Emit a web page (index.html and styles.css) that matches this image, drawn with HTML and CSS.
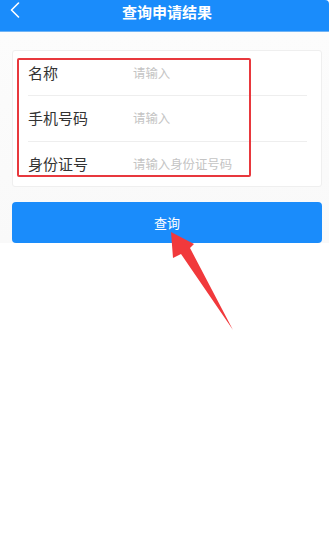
FILE: index.html
```html
<!DOCTYPE html>
<html lang="zh-CN">
<head>
<meta charset="utf-8">
<title>查询申请结果</title>
<link rel="stylesheet" href="styles.css">
</head>
<body>
<header class="topbar">
  <span class="back">
    <svg width="10" height="16" viewBox="0 0 10 16"><path d="M8.5 1 L1.5 8 L8.5 15" fill="none" stroke="#fff" stroke-width="1.6" stroke-linecap="round" stroke-linejoin="round"/></svg>
  </span>
  <h1 class="title">查询申请结果</h1>
</header>
<main class="main">
  <section class="card">
    <div class="row"><span class="label">名称</span><span class="ph">请输入</span></div>
    <div class="row"><span class="label">手机号码</span><span class="ph">请输入</span></div>
    <div class="row"><span class="label">身份证号</span><span class="ph">请输入身份证号码</span></div>
  </section>
  <button class="btn">查询</button>
</main>
<div class="highlight"></div>
<svg class="arrow" width="80" height="110" viewBox="160 225 80 110">
  <polygon points="171,232 194,244 190,248 233,330 181,254 173,258" fill="#f1393c"/>
</svg>
</body>
</html>
```
FILE: styles.css
```css
* { box-sizing: border-box; }
html, body { margin: 0; padding: 0; }
body {
  width: 329px;
  height: 554px;
  background: #ffffff;
  font-family: "Noto Sans CJK SC", "Noto Sans", sans-serif;
  position: relative;
  overflow: hidden;
}
.topbar {
  height: 32px;
  background: #1a8cfb;
  border-bottom: 1px solid #6fb3f5;
  border-top-right-radius: 4px;
  display: flex;
  align-items: center;
  justify-content: center;
  position: relative;
  padding-bottom: 8px;
}
.back {
  position: absolute;
  left: 10px;
  top: 2px;
  display: flex;
}
.title {
  margin: 0;
  color: #fff;
  font-size: 15px;
  font-weight: 700;
  line-height: 20px;
  padding-left: 5px;
}
.main {
  padding: 18px 7px 0 12px;
  background: linear-gradient(#fcfcfc, #f9f9f9);
}
.card {
  background: #fff;
  border: 1px solid #efefef;
  border-radius: 3px;
  height: 137px;
  display: flex;
  flex-direction: column;
  padding: 0 14px 0 15px;
}
.row {
  flex: 1;
  display: flex;
  align-items: center;
  border-bottom: 1px solid #eeeeee;
}
.row:last-child { border-bottom: none; }
.label {
  width: 105px;
  font-size: 15px;
  color: #333;
  line-height: 20px;
}
.ph {
  font-size: 12.4px;
  color: #c4c4c4;
  line-height: 16px;
}
.btn {
  display: block;
  width: 310px;
  height: 41px;
  margin-top: 15px;
  border: none;
  border-radius: 4px;
  background: #1a8cfb;
  color: #fff;
  font-family: inherit;
  font-size: 13px;
  padding: 0;
}
.highlight {
  position: absolute;
  left: 17px;
  top: 58px;
  width: 234px;
  height: 119px;
  border: 2px solid #e8383d;
  border-radius: 2px;
}
.arrow {
  position: absolute;
  left: 160px;
  top: 225px;
}
```
